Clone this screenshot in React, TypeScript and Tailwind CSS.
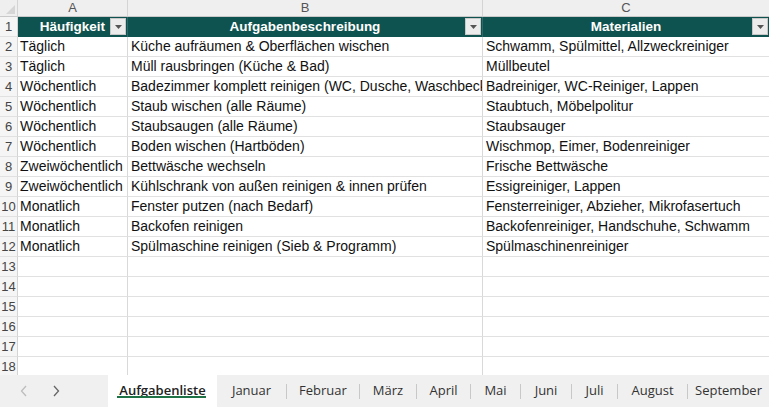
import React from "react";

const rows: [string, string, string][] = [
  ["Täglich", "Küche aufräumen & Oberflächen wischen", "Schwamm, Spülmittel, Allzweckreiniger"],
  ["Täglich", "Müll rausbringen (Küche & Bad)", "Müllbeutel"],
  ["Wöchentlich", "Badezimmer komplett reinigen (WC, Dusche, Waschbecken)", "Badreiniger, WC-Reiniger, Lappen"],
  ["Wöchentlich", "Staub wischen (alle Räume)", "Staubtuch, Möbelpolitur"],
  ["Wöchentlich", "Staubsaugen (alle Räume)", "Staubsauger"],
  ["Wöchentlich", "Boden wischen (Hartböden)", "Wischmop, Eimer, Bodenreiniger"],
  ["Zweiwöchentlich", "Bettwäsche wechseln", "Frische Bettwäsche"],
  ["Zweiwöchentlich", "Kühlschrank von außen reinigen & innen prüfen", "Essigreiniger, Lappen"],
  ["Monatlich", "Fenster putzen (nach Bedarf)", "Fensterreiniger, Abzieher, Mikrofasertuch"],
  ["Monatlich", "Backofen reinigen", "Backofenreiniger, Handschuhe, Schwamm"],
  ["Monatlich", "Spülmaschine reinigen (Sieb & Programm)", "Spülmaschinenreiniger"],
];

const tabs: { name: string; cls: string }[] = [
  { name: "Januar", cls: "w-[69px]" },
  { name: "Februar", cls: "w-[73px]" },
  { name: "März", cls: "w-[57px]" },
  { name: "April", cls: "w-[54px]" },
  { name: "Mai", cls: "w-[50px]" },
  { name: "Juni", cls: "w-[51px]" },
  { name: "Juli", cls: "w-[46px]" },
  { name: "August", cls: "w-[70px]" },
  { name: "September", cls: "w-[82px]" },
];

function FilterBtn() {
  return (
    <div className="absolute right-[1px] top-[1px] w-[16px] h-[17px] bg-[#ececec] border border-[#c8c8c8] flex items-center justify-center">
      <svg width="7" height="4" viewBox="0 0 7 4">
        <path d="M0 0 L7 0 L3.5 4 Z" fill="#555" />
      </svg>
    </div>
  );
}

export default function App() {
  const empty = [13, 14, 15, 16, 17, 18];
  return (
    <div className="w-[769px] h-[407px] overflow-hidden bg-white flex flex-col" style={{ fontFamily: '"Liberation Sans", Arial, sans-serif' }}>
      <div className="h-[375px] shrink-0 overflow-hidden flex flex-col">
        {/* column header */}
        <div className="flex h-[17px] shrink-0 bg-[#efefef] border-b border-[#c9c9c9] text-[13px] text-[#555] leading-[16px]">
          <div className="w-[18px] relative border-r border-[#d4d4d4]">
            <svg className="absolute right-[2px] bottom-[2px]" width="9" height="9" viewBox="0 0 9 9">
              <path d="M9 0 L9 9 L0 9 Z" fill="#d6d6d6" />
            </svg>
          </div>
          <div className="w-[110px] text-center border-r border-[#d4d4d4]">A</div>
          <div className="w-[355px] text-center border-r border-[#d4d4d4]">B</div>
          <div className="flex-1 text-center">C</div>
        </div>
        {/* header row */}
        <div className="flex h-[20px] shrink-0 leading-[19px]">
          <div className="w-[18px] shrink-0 bg-[#f5f5f5] border-r border-[#d4d4d4] border-b border-b-[#e1e1e1] text-center text-[13px] text-[#444]">1</div>
          <div className="w-[110px] shrink-0 relative bg-[#0f5350] border-r border-[#2d6b68] text-white font-bold text-[13.5px] text-center">
            Häufigkeit
            <FilterBtn />
          </div>
          <div className="w-[355px] shrink-0 relative bg-[#0f5350] border-r border-[#2d6b68] text-white font-bold text-[13.5px] text-center">
            Aufgabenbeschreibung
            <FilterBtn />
          </div>
          <div className="flex-1 relative bg-[#0f5350] text-white font-bold text-[13.5px] text-center">
            Materialien
            <FilterBtn />
          </div>
        </div>
        {rows.map((r, i) => (
          <div key={i} className="flex h-[20px] leading-[19px] text-[14px] text-[#111] shrink-0">
            <div className="w-[18px] shrink-0 bg-[#f5f5f5] border-r border-[#d4d4d4] border-b border-b-[#e1e1e1] text-center text-[13px] text-[#444]">{i + 2}</div>
            <div className="w-[110px] shrink-0 border-r border-[#d9d9d9] border-b border-b-[#e1e1e1] pl-[2px] whitespace-nowrap overflow-hidden">{r[0]}</div>
            <div className="w-[355px] shrink-0 border-r border-[#d9d9d9] border-b border-b-[#e1e1e1] pl-[3px] whitespace-nowrap overflow-hidden">{r[1]}</div>
            <div className="flex-1 border-b border-[#e1e1e1] pl-[3px] whitespace-nowrap overflow-hidden">{r[2]}</div>
          </div>
        ))}
        {empty.map((n) => (
          <div key={n} className="flex h-[20px] leading-[19px] shrink-0">
            <div className="w-[18px] shrink-0 bg-[#f5f5f5] border-r border-[#d4d4d4] border-b border-b-[#e1e1e1] text-center text-[13px] text-[#444]">{n}</div>
            <div className="w-[110px] shrink-0 border-r border-[#d9d9d9] border-b border-b-[#e1e1e1]" />
            <div className="w-[355px] shrink-0 border-r border-[#d9d9d9] border-b border-b-[#e1e1e1]" />
            <div className="flex-1 border-b border-[#e1e1e1]" />
          </div>
        ))}
      </div>
      {/* tab bar */}
      <div className="flex-1 flex items-stretch overflow-hidden bg-[#f0f0f0] text-[13px] text-[#333]" style={{ fontFamily: '"Open Sans", "Noto Sans", sans-serif' }}>
        <div className="w-[108px] shrink-0 flex items-center pl-[20px] gap-[24px]">
          <svg width="8" height="12" viewBox="0 0 8 12">
            <path d="M6 1 L1.5 6 L6 11" stroke="#bdbdbd" strokeWidth="1.3" fill="none" />
          </svg>
          <svg width="8" height="12" viewBox="0 0 8 12">
            <path d="M2 1 L6.5 6 L2 11" stroke="#666" strokeWidth="1.3" fill="none" />
          </svg>
        </div>
        <div className="w-[109px] shrink-0 bg-white flex flex-col items-center justify-center font-semibold text-[13px] text-[#222] relative">
          <span className="leading-[18px] mt-[-2px] whitespace-nowrap">Aufgabenliste</span>
          <div className="absolute bottom-[9px] left-[9px] right-[11px] h-[2px] bg-[#1e7145]" />
        </div>
        {tabs.map((t, i) => (
          <div key={t.name} className={`flex items-center shrink-0 ${t.cls}`}>
            {i > 0 && <div className="w-px h-[15px] bg-[#c8c8c8] shrink-0" />}
            <div className="flex-1 text-center leading-[18px] mt-[-2px] whitespace-nowrap">{t.name}</div>
          </div>
        ))}
      </div>
    </div>
  );
}
